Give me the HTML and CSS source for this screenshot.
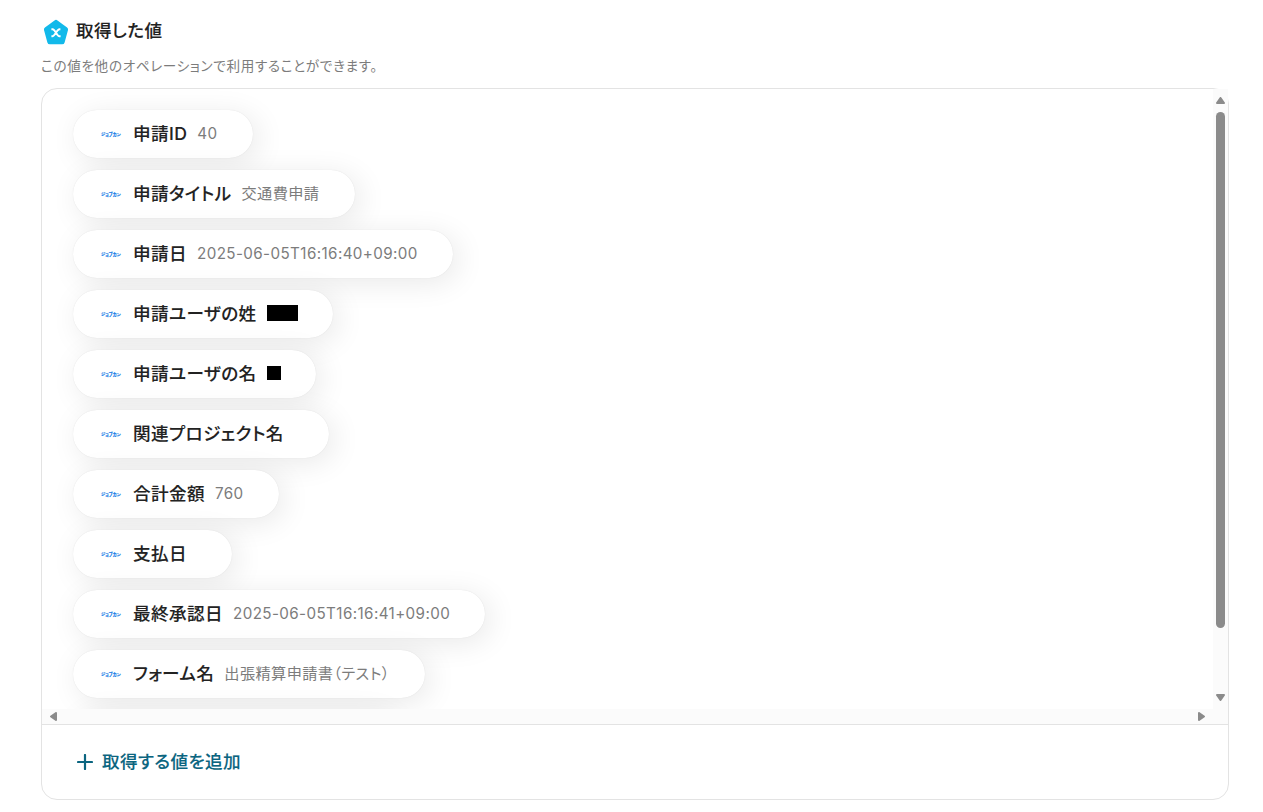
FILE: index.html
```html
<!DOCTYPE html>
<html lang="ja">
<head>
    <meta charset="UTF-8">
    <meta name="viewport" content="width=device-width, initial-scale=1.0">
    <title>取得した値</title>
    <link rel="stylesheet" href="styles.css">
</head>
<body>
    <div class="header">
        <svg class="header-icon" viewBox="0 0 26 26">
            <path d="M13 3.4L22.6 10.4L19.2 22.8H6.8L3.4 10.4Z" fill="#12b9ea" stroke="#12b9ea" stroke-width="5" stroke-linejoin="round"/>
            <path d="M8.4 10.2h1.2c2.6 0 4.2 7 6.8 7h1.2M17.4 10.2h-.9c-2.7 0-4.5 7-7.2 7H8.4" fill="none" stroke="#fff" stroke-width="1.9"/>
        </svg>
        <h1>取得した値</h1>
    </div>
    <p class="description">この値を他のオペレーションで利用することができます。</p>

    <div class="card">
        <div class="scroll-area">
            <div class="values">
                <div class="pill"><span class="logo">ジョブカン</span><span class="label">申請ID</span><span class="value">40</span></div>
                <div class="pill"><span class="logo">ジョブカン</span><span class="label">申請タイトル</span><span class="value">交通費申請</span></div>
                <div class="pill"><span class="logo">ジョブカン</span><span class="label">申請日</span><span class="value">2025-06-05T16:16:40+09:00</span></div>
                <div class="pill"><span class="logo">ジョブカン</span><span class="label">申請ユーザの姓</span><span class="mask mask-wide"></span></div>
                <div class="pill"><span class="logo">ジョブカン</span><span class="label">申請ユーザの名</span><span class="mask"></span></div>
                <div class="pill"><span class="logo">ジョブカン</span><span class="label">関連プロジェクト名</span><span class="value"></span></div>
                <div class="pill"><span class="logo">ジョブカン</span><span class="label">合計金額</span><span class="value">760</span></div>
                <div class="pill"><span class="logo">ジョブカン</span><span class="label">支払日</span><span class="value"></span></div>
                <div class="pill"><span class="logo">ジョブカン</span><span class="label">最終承認日</span><span class="value">2025-06-05T16:16:41+09:00</span></div>
                <div class="pill"><span class="logo">ジョブカン</span><span class="label">フォーム名</span><span class="value">出張精算申請書（テスト）</span></div>
                <div class="pill"></div>
            </div>
            <div class="vbar">
                <svg width="9" height="7" viewBox="0 0 9 7"><path d="M4.5 1L8 6H1Z"/></svg>
                <div class="thumb"></div>
                <svg class="arrow-end" width="9" height="7" viewBox="0 0 9 7"><path d="M4.5 6L1 1H8Z"/></svg>
            </div>
            <div class="hbar">
                <svg width="7" height="9" viewBox="0 0 7 9"><path d="M1 4.5L6 1V8Z"/></svg>
                <svg width="7" height="9" viewBox="0 0 7 9"><path d="M6 4.5L1 1V8Z"/></svg>
            </div>
            <div class="corner"></div>
        </div>
        <div class="footer">
            <button class="btn-add">
                <svg width="16" height="16" viewBox="0 0 16 16"><path d="M8 1v14M1 8h14" stroke="#0b6580" stroke-width="2.2" stroke-linecap="round"/></svg>
                取得する値を追加
            </button>
        </div>
    </div>
</body>
</html>
```

FILE: styles.css
```css
* { box-sizing: border-box; }
body {
    font-family: Inter, "Noto Sans CJK JP", sans-serif;
    font-feature-settings: "palt";
    letter-spacing: 0.4px;
    margin: 0;
    padding: 18px 34px 0 41px;
    height: 812px;
    overflow: hidden;
    background: #fff;
    color: #222;
}
.header {
    display: flex;
    align-items: center;
    gap: 7px;
    height: 28px;
    padding-left: 2px;
}
.header-icon { width: 26px; height: 26px; }
h1 {
    margin: 0;
    font-size: 17.6px;
    line-height: 24px;
    font-weight: 500;
    -webkit-text-stroke: 0.1px;
    padding-bottom: 3px;
}
.description {
    margin: 9px 0 0;
    height: 33px;
    font-size: 13.6px;
    line-height: 22px;
    letter-spacing: 0.65px;
    color: #7c7c7c;
}
.card {
    height: 712px;
    border: 1px solid #e3e3e3;
    border-radius: 16px;
}
.scroll-area {
    display: grid;
    grid-template-columns: 1fr 15px;
    grid-template-rows: 620px 15px;
}
.values {
    display: flex;
    flex-direction: column;
    align-items: flex-start;
    gap: 12px;
    padding: 21px 31px 0;
    border-top-left-radius: 15px;
    overflow: hidden;
}
.pill {
    display: flex;
    align-items: center;
    flex-shrink: 0;
    height: 48px;
    padding: 0 35.3px 0 28px;
    border-radius: 24px;
    background: #fff;
    box-shadow: 0 0 1px rgba(0,0,0,0.12), 5px 5px 30px rgba(0,0,0,0.09);
}
.pill:last-child { width: 320px; }
.logo {
    width: 20px;
    margin: 0 12px 1px 0;
    font-family: "Noto Sans CJK JP", sans-serif;
    font-size: 4.3px;
    line-height: 6px;
    font-weight: 900;
    letter-spacing: 0;
    color: #1a80e8;
    -webkit-text-stroke: 0.1px;
    white-space: nowrap;
}
.label {
    font-size: 17.6px;
    line-height: 24px;
    font-weight: 500;
    -webkit-text-stroke: 0.1px;
    white-space: nowrap;
}
.value {
    margin-left: 10px;
    font-size: 15.2px;
    line-height: 24px;
    color: #7c7c7c;
    white-space: nowrap;
}
.mask {
    width: 14px;
    height: 14px;
    margin-left: 10px;
    margin-top: -2px;
    background: #000;
}
.mask-wide { width: 31px; height: 16px; }
.vbar, .hbar, .corner { background: #fbfbfb; }
.vbar {
    display: flex;
    flex-direction: column;
    align-items: center;
    padding: 8px 0 8px;
}
.hbar {
    display: flex;
    align-items: center;
    justify-content: space-between;
    padding: 0 8px;
}
.vbar svg, .hbar svg {
    flex-shrink: 0;
    fill: #8b8b8b;
    stroke: #8b8b8b;
    stroke-width: 2;
    stroke-linejoin: round;
}
.thumb {
    width: 9px;
    height: 516px;
    margin-top: 8px;
    border-radius: 5px;
    background: #8b8b8b;
}
.arrow-end { margin-top: auto; }
.footer {
    display: flex;
    align-items: center;
    height: 75px;
    padding-left: 35px;
    border-top: 1px solid #e3e3e3;
}
.btn-add {
    display: flex;
    align-items: center;
    gap: 9px;
    padding: 0;
    border: none;
    background: none;
    color: #0b6580;
    font: inherit;
    font-size: 17.6px;
    font-weight: 500;
    -webkit-text-stroke: 0.1px;
    line-height: 24px;
    letter-spacing: inherit;
    cursor: pointer;
}
```
